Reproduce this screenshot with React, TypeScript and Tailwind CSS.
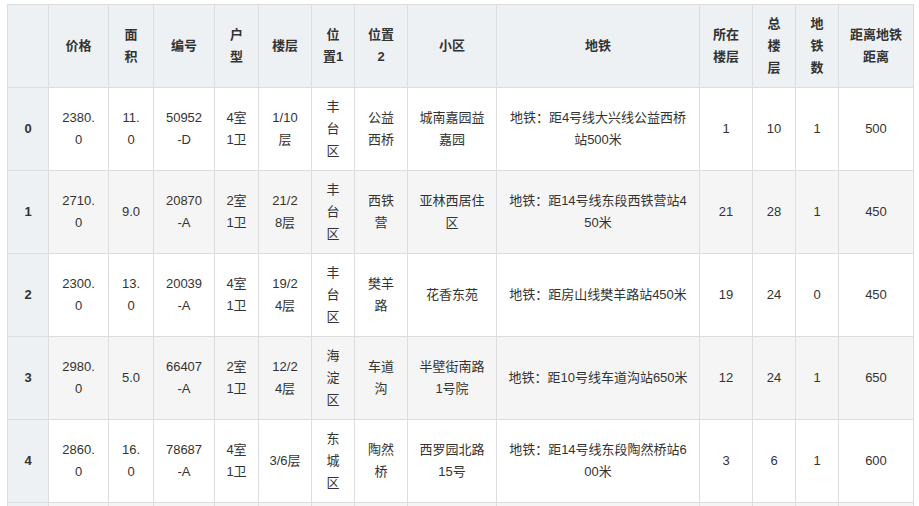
const headers = ['', '价格', '面积', '编号', '户型', '楼层', '位置1', '位置2', '小区', '地铁', '所在楼层', '总楼层', '地铁数', '距离地铁距离'];
const widths = ['w-[41px]', 'w-[60px]', 'w-[45px]', 'w-[61px]', 'w-[44px]', 'w-[53px]', 'w-[43px]', 'w-[53px]', 'w-[89px]', 'w-[203px]', 'w-[53px]', 'w-[43px]', 'w-[43px]', 'w-[75px]'];

const rows = [
  ['0', '2380.0', '11.0', '50952-D', '4室1卫', '1/10层', '丰台区', '公益西桥', '城南嘉园益嘉园', '地铁：距4号线大兴线公益西桥站500米', '1', '10', '1', '500'],
  ['1', '2710.0', '9.0', '20870-A', '2室1卫', '21/28层', '丰台区', '西铁营', '亚林西居住区', '地铁：距14号线东段西铁营站450米', '21', '28', '1', '450'],
  ['2', '2300.0', '13.0', '20039-A', '4室1卫', '19/24层', '丰台区', '樊羊路', '花香东苑', '地铁：距房山线樊羊路站450米', '19', '24', '0', '450'],
  ['3', '2980.0', '5.0', '66407-A', '2室1卫', '12/24层', '海淀区', '车道沟', '半壁街南路1号院', '地铁：距10号线车道沟站650米', '12', '24', '1', '650'],
  ['4', '2860.0', '16.0', '78687-A', '4室1卫', '3/6层', '东城区', '陶然桥', '西罗园北路15号', '地铁：距14号线东段陶然桥站600米', '3', '6', '1', '600'],
  ['', '', '', '', '', '', '', '', '', '', '', '', '', ''],
];

export default function App() {
  return (
    <div className="w-[919px] h-[506px] overflow-hidden bg-white pl-[7px] pt-[4px] text-[13px] leading-[22px] text-[#333]" style={{ fontFamily: '"Liberation Sans", "Noto Sans CJK SC", sans-serif' }}>
      <table className="table-fixed border-collapse w-[906px]">
        <thead>
          <tr className="h-[83px] bg-[#eef1f4]">
            {headers.map((h, i) => (
              <th key={i} className={`${widths[i]} border border-[#dddddd] ${i === 9 ? 'px-[9px]' : 'px-[10px]'} font-bold text-center align-middle break-all`}>{h}</th>
            ))}
          </tr>
        </thead>
        <tbody>
          {rows.map((r, ri) => (
            <tr key={ri} className={`h-[83px] ${ri % 2 === 1 ? 'bg-[#f5f5f5]' : 'bg-white'}`}>
              {r.map((c, ci) => ci === 0 ? (
                <th key={ci} className="border border-[#dddddd] bg-[#eef1f4] font-bold text-center align-middle">{c}</th>
              ) : (
                <td key={ci} className={`border border-[#dddddd] ${ci === 9 ? 'px-[9px]' : 'px-[10px]'} text-center align-middle break-all`}>{c}</td>
              ))}
            </tr>
          ))}
        </tbody>
      </table>
    </div>
  );
}
